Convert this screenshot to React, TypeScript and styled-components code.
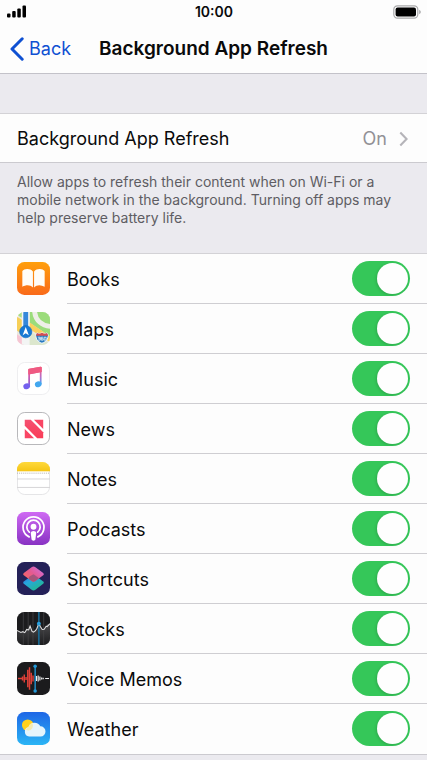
import React, { useId, useState } from "react";
import styled, { createGlobalStyle } from "styled-components";

const GlobalStyle = createGlobalStyle`
  *, *::before, *::after { box-sizing: border-box; }
  body {
    margin: 0;
    background: #ebeaef;
    color: #0a0a0b;
    font-family: Inter, "Liberation Sans", sans-serif;
    font-size: 18px;
    line-height: 24px;
  }
`;

const Screen = styled.div`
  display: flex;
  flex-direction: column;
`;

const Header = styled.header`
  background: #fdfdfd;
  border-bottom: 1px solid #c3c2c9;
`;

const StatusBar = styled.div`
  display: grid;
  grid-template-columns: 1fr auto 1fr;
  align-items: center;
  height: 23px;
  padding: 0 6px 0 7px;
`;

const Clock = styled.time`
  font-size: 14px;
  line-height: 16px;
  font-weight: 600;
`;

const SignalIcon = styled.svg`
  width: 20px;
  height: 13px;
`;

const BatteryIcon = styled.svg`
  width: 28px;
  height: 14px;
  justify-self: end;
`;

const NavBar = styled.nav`
  display: grid;
  grid-template-columns: 1fr auto 1fr;
  align-items: center;
  height: 50px;
  padding: 2px 10px 0;
`;

const BackButton = styled.button`
  display: flex;
  align-items: center;
  gap: 5px;
  padding: 0;
  border: 0;
  background: none;
  color: #0f50d2;
  font: inherit;
  cursor: pointer;
`;

const BackChevron = styled.svg`
  width: 14px;
  height: 24px;
`;

const Title = styled.h1`
  margin: 0;
  font-size: 19px;
  line-height: 24px;
  font-weight: 600;
`;

const Main = styled.main`
  padding-top: 39px;
`;

const Group = styled.section`
  background: #fdfdfd;
  border-top: 1px solid #d3d2d6;
  border-bottom: 1px solid #cbcacf;
`;

const LinkRow = styled.button`
  display: flex;
  align-items: center;
  width: 100%;
  height: 48px;
  padding: 2px 19px 0 17px;
  border: 0;
  background: none;
  color: inherit;
  font: inherit;
  text-align: left;
  cursor: pointer;
`;

const RowValue = styled.span`
  margin-left: auto;
  color: #929196;
`;

const RowChevron = styled.svg`
  width: 9px;
  height: 16px;
  margin-left: 12px;
`;

const Note = styled.p`
  margin: 0;
  padding: 10px 17px 26px;
  color: #5e5d63;
  font-size: 14px;
  line-height: 18px;
`;

const AppList = styled.ul`
  margin: 0;
  padding: 0;
  list-style: none;
`;

const AppRow = styled.li`
  display: flex;
  align-items: center;
  gap: 17px;
  height: 50px;
  padding-left: 17px;
`;

const AppIcon = styled.svg`
  flex: none;
  width: 33px;
  height: 33px;
  margin-bottom: 1px;
`;

const RowBody = styled.div<{ $last: boolean }>`
  display: flex;
  flex: 1;
  align-items: center;
  justify-content: space-between;
  height: 100%;
  padding-right: 17px;
  border-bottom: 1px solid ${(p) => (p.$last ? "transparent" : "#cfced2")};
`;

const AppLabel = styled.label`
  padding-top: 2px;
`;

const Switch = styled.input`
  appearance: none;
  display: flex;
  align-items: center;
  justify-content: flex-start;
  width: 58px;
  height: 35px;
  margin: 0;
  padding: 2px;
  border-radius: 18px;
  background: #dedee2;
  cursor: pointer;

  &:checked {
    justify-content: flex-end;
    background: #35c759;
  }

  &::before {
    content: "";
    width: 31px;
    height: 31px;
    border-radius: 50%;
    background: #fefefe;
    box-shadow: -1px 1px 3px rgba(0, 0, 0, 0.14);
  }
`;

type IconName =
  | "books" | "maps" | "music" | "news" | "notes"
  | "podcasts" | "shortcuts" | "stocks" | "voice" | "weather";

const art: Record<IconName, React.ReactNode> = {
  books: (
    <>
      <defs>
        <linearGradient id="books-bg" x2="0" y2="1">
          <stop stopColor="#ff9f0c" /><stop offset="1" stopColor="#f96a1b" />
        </linearGradient>
      </defs>
      <rect width="34" height="34" rx="7.5" fill="url(#books-bg)" />
      <path d="M16.4 9.8C14.8 7.9 12.7 7.2 10.4 7.3C8.3 7.4 6.6 8.2 5.5 9.3V25.5C9.4 23.3 13.7 23.3 16.4 26.3Z" fill="#fffdf8" />
      <path d="M17.6 9.8C19.2 7.9 21.3 7.2 23.6 7.3C25.7 7.4 27.4 8.2 28.5 9.3V25.5C24.6 23.3 20.3 23.3 17.6 26.3Z" fill="#fffdf8" />
    </>
  ),
  maps: (
    <>
      <defs>
        <clipPath id="maps-clip"><rect width="34" height="34" rx="7.5" /></clipPath>
      </defs>
      <g clipPath="url(#maps-clip)">
        <rect width="34" height="34" fill="#ece9df" />
        <path d="M13 0H34V25L13 11Z" fill="#9bdc7b" />
        <path d="M18 -3C18 9 26 15 38 15" fill="none" stroke="#eeefe8" strokeWidth="5" />
        <path d="M0 5L5 8V23L0 19Z" fill="#f7cf57" />
        <path d="M0 23L12 31V34H0Z" fill="#f6c5d3" />
        <path d="M12 10L34 25V31L12 17Z" fill="#fbd05d" />
        <path d="M12 19L34 33V34H12Z" fill="#dce7cd" />
        <path d="M0 0H5V6L0 3Z" fill="#a8dc86" />
        <rect x="5" width="8" height="34" fill="#f3f5f4" />
        <rect x="6.5" width="5" height="21" fill="#3588da" />
        <circle cx="9" cy="20.3" r="6.3" fill="#1979d3" stroke="#1269bf" strokeWidth=".6" />
        <path d="M9 15.5L12.2 24L9 21.9L5.8 24Z" fill="#fff" />
        <path d="M20.5 21.5C22.4 22.7 24 22.3 25.7 21.3C27.4 22.3 29.2 22.7 31 21.5L32.3 24C31.5 28.2 31 30.2 25.7 32.2C20.5 30.2 20 28.2 19.2 24Z" fill="#2879bf" stroke="#f4f9fb" strokeWidth="1" />
        <path d="M20.5 21.7C22.4 22.9 24 22.5 25.7 21.5C27.4 22.5 29.2 22.9 31 21.7L32 24.5H19.5Z" fill="#d94c50" />
        <path d="M21.5 26H24V29H21.5M22 27.5H24M27 26H25V29H27V27.5H25M28 26H30V29H28Z" fill="none" stroke="#f2f8fb" strokeWidth=".8" />
      </g>
    </>
  ),
  music: (
    <>
      <defs>
        <linearGradient id="music-note" x1="20" y1="5" x2="13" y2="29" gradientUnits="userSpaceOnUse">
          <stop stopColor="#fb5874" /><stop offset=".4" stopColor="#d75ba5" /><stop offset="1" stopColor="#655ff0" />
        </linearGradient>
        <linearGradient id="music-stem" x1="0" y1="5" x2="0" y2="27" gradientUnits="userSpaceOnUse">
          <stop stopColor="#fb5874" /><stop offset=".45" stopColor="#bd6cc4" /><stop offset=".8" stopColor="#48a8f3" />
        </linearGradient>
      </defs>
      <rect x=".5" y=".5" width="33" height="33" rx="7.5" fill="#fff" stroke="#ededf0" />
      <path d="M11.6 8.1Q11.6 7.2 12.6 7L24.1 4.8Q25.3 4.6 25.3 5.7V10.2L13.4 12.6V24.8H11.6Z" fill="url(#music-note)" />
      <path d="M23.5 5.5H25.3V22.8H23.5Z" fill="url(#music-stem)" />
      <path d="M11.6 8.1Q11.6 7.2 12.6 7L24.1 4.8Q25.3 4.6 25.3 5.7V10.2L11.6 13Z" fill="#ef5a82" />
      <ellipse cx="10" cy="25" rx="3.5" ry="3" transform="rotate(-20 10 25)" fill="#7461ee" />
      <ellipse cx="21.9" cy="22.9" rx="3.5" ry="3" transform="rotate(-20 21.9 22.9)" fill="#43a7ef" />
    </>
  ),
  news: (
    <>
      <defs>
        <linearGradient id="news-red" x2="0" y2="1">
          <stop stopColor="#f55172" /><stop offset="1" stopColor="#fa3c57" />
        </linearGradient>
      </defs>
      <rect x=".5" y=".5" width="33" height="33" rx="7.5" fill="#fff" stroke="#b6b6b9" />
      <path d="M8 8H14.2L27 20.8V27H20.8L8 14.2Z" fill="url(#news-red)" />
      <path d="M17.4 8H27V17.6ZM8 17.4L17.6 27H8Z" fill="#f94564" />
    </>
  ),
  notes: (
    <>
      <defs>
        <clipPath id="notes-clip"><rect width="34" height="34" rx="7.5" /></clipPath>
        <linearGradient id="notes-top" x2="0" y2="1">
          <stop stopColor="#ffd93c" /><stop offset="1" stopColor="#f5c515" />
        </linearGradient>
      </defs>
      <rect x=".5" y=".5" width="33" height="33" rx="7.5" fill="#fff" stroke="#e4e4e6" />
      <g clipPath="url(#notes-clip)">
        <rect width="34" height="9.6" fill="url(#notes-top)" />
        <path d="M0 11.5H34" stroke="#b3b1ac" strokeDasharray="1 1" />
        <path d="M0 17.5H34M0 26.2H34" stroke="#d5d4d6" />
      </g>
    </>
  ),
  podcasts: (
    <>
      <defs>
        <linearGradient id="podcasts-bg" x2="0" y2="1">
          <stop stopColor="#cf6af3" /><stop offset="1" stopColor="#8832c3" />
        </linearGradient>
      </defs>
      <rect width="34" height="34" rx="7.5" fill="url(#podcasts-bg)" />
      <g fill="none" stroke="#fff" strokeLinecap="round">
        <path d="M12.5 25.6A10.8 10.8 0 1 1 21.5 25.6" strokeWidth="1.8" />
        <path d="M12.7 20.7A6.9 6.9 0 1 1 21.3 20.7" strokeWidth="1.8" />
      </g>
      <circle cx="17" cy="15.2" r="3" fill="#fff" />
      <path d="M14.2 21.6C14.2 18.8 19.8 18.8 19.8 21.6L19 28C18.7 30 15.3 30 15 28Z" fill="#fff" />
    </>
  ),
  shortcuts: (
    <>
      <defs>
        <linearGradient id="shortcuts-low" x1=".1" y1="0" x2=".9" y2="1">
          <stop stopColor="#2e66da" /><stop offset=".35" stopColor="#27a6dd" /><stop offset="1" stopColor="#20bd80" />
        </linearGradient>
        <linearGradient id="shortcuts-high" x1="1" y1="0" x2="0" y2=".8">
          <stop stopColor="#ca73ec" /><stop offset=".55" stopColor="#e45a91" /><stop offset="1" stopColor="#fa675c" />
        </linearGradient>
      </defs>
      <rect width="34" height="34" rx="7.5" fill="#242158" />
      <path d="M15 14.2Q17 12.8 19 14.2L27 20Q28.5 21.2 27 22.4L19 28.5Q17 30 15 28.5L7 22.4Q5.5 21.2 7 20Z" fill="url(#shortcuts-low)" />
      <path d="M15 5.3Q17 3.8 19 5.3L27 11.3Q28.5 12.5 27 13.7L19 19.6Q17 21 15 19.6L7 13.7Q5.5 12.5 7 11.3Z" fill="url(#shortcuts-high)" />
      <path d="M13.7 14.4L17 12.5L22.7 16.8L19 19.6Q17 21 15 19.6L12.6 17.8Q11 16.2 13.7 14.4Z" fill="#8d5178" opacity=".75" />
    </>
  ),
  stocks: (
    <>
      <defs>
        <linearGradient id="stocks-fill" x2="0" y2="1">
          <stop stopColor="#4a4a4c" /><stop offset="1" stopColor="#1c1c1e" />
        </linearGradient>
      </defs>
      <rect width="34" height="34" rx="7.5" fill="#1b1b1d" />
      <path d="M0 19L4 21L8 21L10 18L12 18L13.5 14.5L16 20L19 19L21 16L23 12L26 18L29 16L31 13L34 12V26.5Q34 34 26.5 34H7.5Q0 34 0 26.5Z" fill="url(#stocks-fill)" />
      <path d="M6.5 0V34M11.5 0V34M16.5 0V34M27.5 0V34" stroke="#434346" strokeWidth=".8" />
      <path d="M22.5 0V34" stroke="#1a668e" strokeWidth="1.8" />
      <path d="M0 19L4 21L6 20.3L8 21.3L10 18L12 18.5L13.5 14.5L15.5 20L17 20.7L19 19.3L20.5 17L22.5 12L24 15L26 18L28 17.8L30 14.7L31 15L34 12" fill="none" stroke="#dededf" strokeWidth="1.1" />
      <circle cx="22.5" cy="12" r="2" fill="#28a1df" />
    </>
  ),
  voice: (
    <>
      <rect width="34" height="34" rx="7.5" fill="#1b1b1d" />
      <path d="M1 17H5M5.7 15V19M7.5 13V21M9.3 15.5V18.5M11.1 8V26M12.9 5.5V28.5M14.7 11V23M16.5 14V20" stroke="#df4038" strokeWidth="1.5" />
      <path d="M20 14.5V19.5M21.8 14V20M23.6 15V19M25.4 16V18M27 16.2V17.8M29 17H33" stroke="#f2f2f3" strokeWidth="1.2" />
      <path d="M18.7 5V30" stroke="#2399d8" strokeWidth="1.4" />
      <circle cx="18.7" cy="4.5" r="1.8" fill="#2399d8" />
      <circle cx="18.7" cy="30" r="1.8" fill="#2399d8" />
    </>
  ),
  weather: (
    <>
      <defs>
        <linearGradient id="weather-bg" x2="0" y2="1">
          <stop stopColor="#1e66e6" /><stop offset="1" stopColor="#2bb5f5" />
        </linearGradient>
      </defs>
      <rect width="34" height="34" rx="7.5" fill="url(#weather-bg)" />
      <circle cx="11" cy="13.5" r="5.9" fill="#ffd11c" />
      <path d="M12.5 25.2A5 5 0 0 1 11.8 15.4A6.6 6.6 0 0 1 24 14.8A5.2 5.2 0 1 1 24.3 25.2Z" fill="#e5f5fc" />
      <path d="M11.8 15.4Q12.4 12.2 15.4 11Q17.3 13.6 15.6 17Q13.5 20 9.2 18.4Q9.8 16 11.8 15.4Z" fill="#f7e8a0" opacity=".8" />
    </>
  ),
};

const apps: { name: string; icon: IconName }[] = [
  { name: "Books", icon: "books" },
  { name: "Maps", icon: "maps" },
  { name: "Music", icon: "music" },
  { name: "News", icon: "news" },
  { name: "Notes", icon: "notes" },
  { name: "Podcasts", icon: "podcasts" },
  { name: "Shortcuts", icon: "shortcuts" },
  { name: "Stocks", icon: "stocks" },
  { name: "Voice Memos", icon: "voice" },
  { name: "Weather", icon: "weather" },
];

function AppToggle({ name, icon, last }: { name: string; icon: IconName; last: boolean }) {
  const id = useId();
  const [on, setOn] = useState(true);
  return (
    <AppRow>
      <AppIcon viewBox="0 0 34 34" aria-hidden="true">{art[icon]}</AppIcon>
      <RowBody $last={last}>
        <AppLabel htmlFor={id}>{name}</AppLabel>
        <Switch id={id} type="checkbox" role="switch" checked={on} onChange={(e) => setOn(e.target.checked)} />
      </RowBody>
    </AppRow>
  );
}

export default function App() {
  return (
    <Screen>
      <GlobalStyle />
      <Header>
        <StatusBar>
          <SignalIcon viewBox="0 0 20 13" aria-hidden="true">
            <rect x="0" y="8.5" width="3.5" height="4" rx="1" />
            <rect x="5.2" y="6" width="3.5" height="6.5" rx="1" />
            <rect x="10.3" y="3.5" width="3.5" height="9" rx="1" />
            <rect x="15.5" y="0.5" width="3.5" height="12" rx="1" />
          </SignalIcon>
          <Clock>10:00</Clock>
          <BatteryIcon viewBox="0 0 28 14" aria-hidden="true">
            <rect x="0.8" y="0.8" width="24" height="12.4" rx="3.6" fill="#fdfdfd" stroke="#a9a9ab" strokeWidth="1.2" />
            <rect x="2.6" y="2.6" width="20.4" height="8.8" rx="2" />
            <path d="M26.2 4.7Q27.8 5.4 27.8 7Q27.8 8.6 26.2 9.3Z" fill="#a9a9ab" />
          </BatteryIcon>
        </StatusBar>
        <NavBar>
          <BackButton type="button">
            <BackChevron viewBox="0 0 14 24" aria-hidden="true">
              <path d="M12.2 1.8L2 12L12.2 22.2" fill="none" stroke="#0f50d2" strokeWidth="3" strokeLinecap="round" strokeLinejoin="round" />
            </BackChevron>
            Back
          </BackButton>
          <Title>Background App Refresh</Title>
        </NavBar>
      </Header>
      <Main>
        <Group>
          <LinkRow type="button">
            <span>Background App Refresh</span>
            <RowValue>On</RowValue>
            <RowChevron viewBox="0 0 9 16" aria-hidden="true">
              <path d="M1.3 1.5L7.6 8L1.3 14.5" fill="none" stroke="#b5b4b9" strokeWidth="2.1" />
            </RowChevron>
          </LinkRow>
        </Group>
        <Note>
          Allow apps to refresh their content when on Wi-Fi or a mobile network in the background. Turning off apps may
          help preserve battery life.
        </Note>
        <Group>
          <AppList>
            {apps.map((app, i) => (
              <AppToggle key={app.name} name={app.name} icon={app.icon} last={i === apps.length - 1} />
            ))}
          </AppList>
        </Group>
      </Main>
    </Screen>
  );
}
